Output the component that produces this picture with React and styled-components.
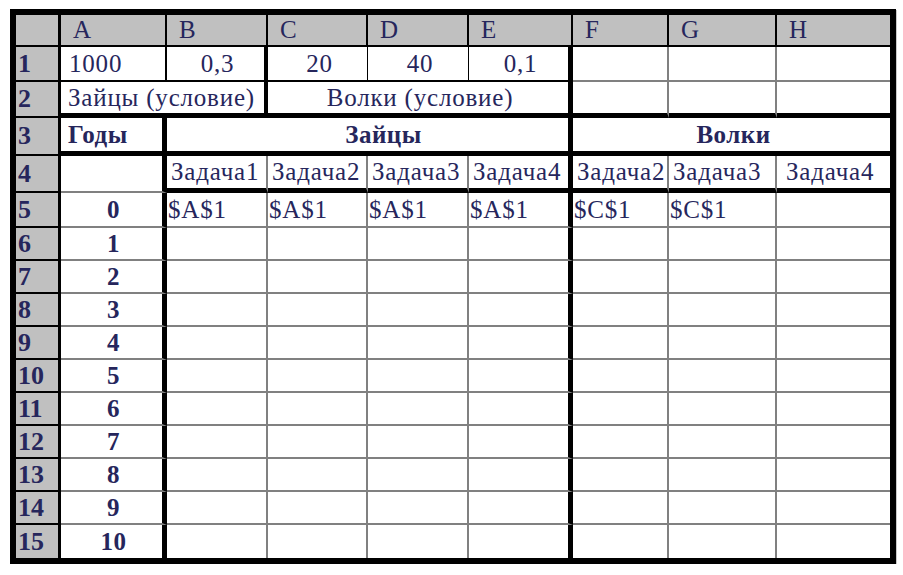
import React from 'react';
import styled, { createGlobalStyle } from 'styled-components';

const INK = '#26265c';

const lines = {
  thin: '1px solid #000',
  black: '2px solid #000',
  mid: '4px solid #000',
  thick: '5px solid #000',
  gray: '2px solid #808080',
  none: '0 none',
};

const columns = ['A', 'B', 'C', 'D', 'E', 'F', 'G', 'H'];

// each row: list of cells { text, span, r, b, align, bold, pad }
const rows = [
  [
    { text: '1000', r: 'black', b: 'black', pad: 8 },
    { text: '0,3', r: 'mid', b: 'black', align: 'center' },
    { text: '20', r: 'thin', b: 'black', align: 'center' },
    { text: '40', r: 'thin', b: 'black', align: 'center' },
    { text: '0,1', r: 'thick', b: 'black', align: 'center' },
    { r: 'gray', b: 'gray' },
    { r: 'gray', b: 'gray' },
    { b: 'gray' },
  ],
  [
    { text: 'Зайцы (условие)', span: 2, r: 'mid', b: 'thick', pad: 7 },
    { text: 'Волки (условие)', span: 3, r: 'thick', b: 'thick', align: 'center' },
    { r: 'gray', b: 'thick' },
    { r: 'gray', b: 'thick' },
    { b: 'thick' },
  ],
  [
    { text: 'Годы', r: 'thick', b: 'thick', bold: true, pad: 7 },
    { text: 'Зайцы', span: 4, r: 'thick', b: 'thick', bold: true, align: 'center', pad: 32 },
    { text: 'Волки', span: 3, b: 'thick', bold: true, align: 'center' },
  ],
  [
    { r: 'thick', b: 'gray' },
    { text: 'Задача1', r: 'gray', b: 'thick' },
    { text: 'Задача2', r: 'gray', b: 'thick' },
    { text: 'Задача3', r: 'gray', b: 'thick' },
    { text: 'Задача4', r: 'thick', b: 'thick' },
    { text: 'Задача2', r: 'gray', b: 'thick' },
    { text: 'Задача3', r: 'gray', b: 'thick' },
    { text: 'Задача4', b: 'thick', pad: 9 },
  ],
  ...Array.from({ length: 11 }, (_, i) => {
    const b = i === 10 ? 'none' : 'gray';
    const first = i === 0;
    return [
      { text: String(i), r: 'thick', b, bold: true, align: 'center' },
      { text: first ? '$A$1' : '', r: 'gray', b, pad: 1 },
      { text: first ? '$A$1' : '', r: 'gray', b, pad: 1 },
      { text: first ? '$A$1' : '', r: 'gray', b, pad: 1 },
      { text: first ? '$A$1' : '', r: 'thick', b, pad: 1 },
      { text: first ? '$C$1' : '', r: 'gray', b, pad: 1 },
      { text: first ? '$C$1' : '', r: 'gray', b, pad: 1 },
      { b },
    ];
  }),
];

const App = () => (
  <>
    <GlobalStyle />
    <Page>
      <Sheet>
        <Corner />
        {columns.map((c, i) => (
          <ColHead key={c} $last={i === columns.length - 1}>
            {c}
          </ColHead>
        ))}
        {rows.map((cells, ri) => (
          <React.Fragment key={ri}>
            <RowHead $last={ri === rows.length - 1}>{ri + 1}</RowHead>
            {cells.map((cell, ci) => (
              <Cell
                key={ci}
                $span={cell.span}
                $r={cell.r}
                $b={cell.b}
                $align={cell.align}
                $bold={cell.bold}
                $pad={cell.pad}
              >
                {cell.text}
              </Cell>
            ))}
          </React.Fragment>
        ))}
      </Sheet>
    </Page>
  </>
);

const GlobalStyle = createGlobalStyle`
  *, *::before, *::after {
    box-sizing: border-box;
  }
  html, body {
    margin: 0;
    padding: 0;
    background: #fff;
  }
`;

const Page = styled.div`
  padding: 9px 0 0 10px;
`;

const Sheet = styled.div`
  display: grid;
  grid-template-columns: 45px 106px 101px 100px 101px 104px 96px 108px 113px;
  grid-template-rows: 32px 35px 36px 38px 37px 35px repeat(10, 33px);
  width: max-content;
  border: 6px solid #000;
  box-shadow: 1px 1px 0 #c8c8c8;
  background: #fff;
  color: ${INK};
  font-family: 'Liberation Serif', serif;
`;

const Corner = styled.div`
  background: #c0c0c0;
  border-right: 3px solid #000;
  border-bottom: 2px solid #000;
`;

const ColHead = styled.div`
  display: flex;
  align-items: center;
  padding-left: 12px;
  background: #c0c0c0;
  border-right: ${(p) => (p.$last ? 'none' : '2px solid #000')};
  border-bottom: 2px solid #000;
  font-size: 25px;
`;

const RowHead = styled.div`
  display: flex;
  align-items: center;
  padding-left: 2px;
  background: #c0c0c0;
  border-right: 3px solid #000;
  border-bottom: ${(p) => (p.$last ? 'none' : '2px solid #000')};
  font-weight: 700;
  font-size: 26px;
`;

const Cell = styled.div`
  grid-column: span ${(p) => p.$span || 1};
  display: flex;
  align-items: center;
  justify-content: ${(p) => (p.$align === 'center' ? 'center' : 'flex-start')};
  padding-left: ${(p) => p.$pad ?? 4}px;
  border-right: ${(p) => lines[p.$r || 'none']};
  border-bottom: ${(p) => lines[p.$b || 'none']};
  font-weight: ${(p) => (p.$bold ? 700 : 400)};
  font-size: 25px;
  letter-spacing: ${(p) => (p.$bold ? '0.5px' : '0.8px')};
  white-space: nowrap;
  overflow: hidden;
`;

export default App;
